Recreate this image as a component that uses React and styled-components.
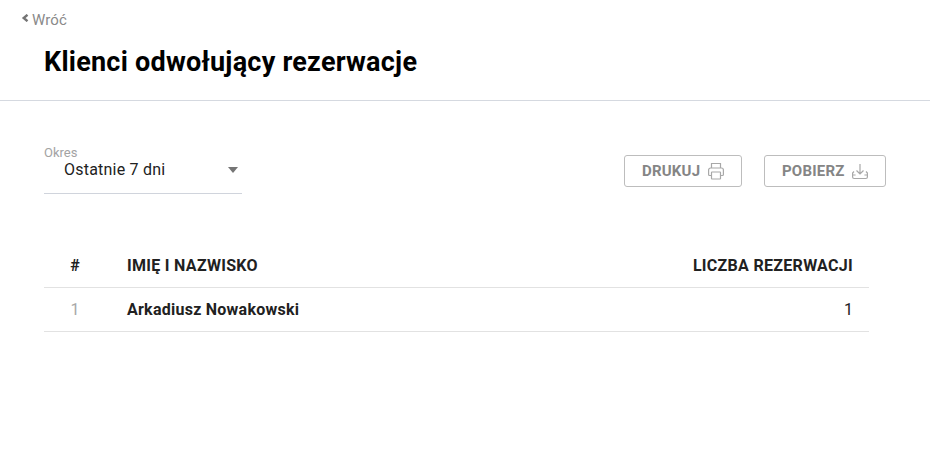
import React from "react";
import styled, { createGlobalStyle } from "styled-components";

const Global = createGlobalStyle`
  html, body { margin: 0; padding: 0; background: #fff; }
  body { font-family: Roboto, "Liberation Sans", sans-serif; color: #212121; }
`;
const Page = styled.div`width: 930px; height: 473px; overflow: hidden; background: #fff;`;
const Header = styled.header`
  height: 100px; border-bottom: 1px solid #d5d9e0;
  display: flex; flex-direction: column;
`;
const Back = styled.a`
  display: flex; align-items: center; gap: 2px; margin: 11px 0 0 21px; height: 18px;
  font-size: 15px; line-height: 18px; color: #8a8a8a; letter-spacing: 0.1px;
`;
const Chevron = styled.svg`width: 9px; height: 8px; margin-top: -4px; flex: none;`;
const Title = styled.h1`
  margin: 16px 0 0 44px; font-size: 27px; line-height: 34px; font-weight: 700; color: #000;
  letter-spacing: 0.24px;
`;
const Main = styled.main`padding: 44px 44px 0; width: 842px;`;
const Toolbar = styled.div`display: flex; justify-content: space-between; align-items: flex-start;`;
const Select = styled.div`
  width: 198px; height: 49px; box-sizing: border-box; border-bottom: 1px solid #d0d4dc;
  display: flex; flex-direction: column;
`;
const SelectLabel = styled.div`font-size: 13px; line-height: 14px; color: #a3a3a3; margin-top: 1px;`;
const SelectRow = styled.div`
  display: flex; justify-content: space-between; align-items: center;
  padding: 0 4px 0 20px; font-size: 16px; line-height: 20px; color: #212121; letter-spacing: 0.22px;
`;
const Caret = styled.span`
  width: 0; height: 0; border-left: 5.5px solid transparent; border-right: 5.5px solid transparent;
  border-top: 6px solid #757575; margin-top: -1px;
`;
const Buttons = styled.div`display: flex; gap: 22px; margin: 10px 0 0;`;
const Button = styled.button`
  height: 32px; width: ${p => p.$w}px; box-sizing: border-box; padding: 0 0 0 17px;
  display: flex; align-items: center; gap: ${p => p.$gap}px;
  background: #fff; border: 1px solid #bdbdbd; border-radius: 3px;
  font: 700 15px Roboto, sans-serif; color: #858585; letter-spacing: 0.2px;
`;
const Icon = styled.svg`width: 16px; height: 18px; flex: none; fill: none; stroke: #a8a8a8; stroke-width: 1.2;`;
const Table = styled.div`margin-top: 50px; width: 825px;`;
const Row = styled.div`
  display: grid; grid-template-columns: 83px 1fr auto; align-items: center;
  height: 44px; box-sizing: border-box; padding-right: 16px; border-bottom: 1px solid #e2e2e2;
  font-size: 16px; color: #212121;
`;
const Num = styled.span`
  text-align: center; padding-right: 21px;
  color: ${p => (p.$head ? "#212121" : "#a8a8a8")};
  font-weight: ${p => (p.$head ? 700 : 400)};
`;
const Head = styled.span`font-weight: 700; letter-spacing: 0.3px;`;
const Name = styled.span`font-weight: 700; letter-spacing: 0.25px;`;
const Count = styled.span`font-weight: 400;`;

export default function App() {
  return (
    <Page>
      <Global />
      <Header>
        <Back>
          <Chevron viewBox="0 0 9 8"><path d="M6.500 .8 2.700 4l3.800 3.200" fill="none" stroke="#757575" strokeWidth="2.400" /></Chevron>
          Wróć
        </Back>
        <Title>Klienci odwołujący rezerwacje</Title>
      </Header>
      <Main>
        <Toolbar>
          <Select>
            <SelectLabel>Okres</SelectLabel>
            <SelectRow>Ostatnie 7 dni<Caret /></SelectRow>
          </Select>
          <Buttons>
            <Button $w={118} $gap={8}>DRUKUJ
              <Icon viewBox="0 0 16 18">
                <path d="M3.500 6V1.500h9V6M3.500 13.500H1.600a1 1 0 0 1-1-1V8a2 2 0 0 1 2-2h10.800a2 2 0 0 1 2 2v4.500a1 1 0 0 1-1 1h-1.900" />
                <rect x="3.500" y="10" width="9" height="7" rx="0.500" />
              </Icon>
            </Button>
            <Button $w={122} $gap={7}>POBIERZ
              <Icon viewBox="0 0 16 18">
                <path d="M2 9.500.6 11v4a1.500 1.500 0 0 0 1.500 1.500h11.800a1.500 1.500 0 0 0 1.500-1.500v-4L14 9.500M8 2v10M4.500 8.500 8 12l3.500-3.500M.6 13h3M12.400 13h3" />
              </Icon>
            </Button>
          </Buttons>
        </Toolbar>
        <Table>
          <Row>
            <Num $head>#</Num>
            <Head>IMIĘ I NAZWISKO</Head>
            <Head>LICZBA REZERWACJI</Head>
          </Row>
          <Row>
            <Num>1</Num>
            <Name>Arkadiusz Nowakowski</Name>
            <Count>1</Count>
          </Row>
        </Table>
      </Main>
    </Page>
  );
}
